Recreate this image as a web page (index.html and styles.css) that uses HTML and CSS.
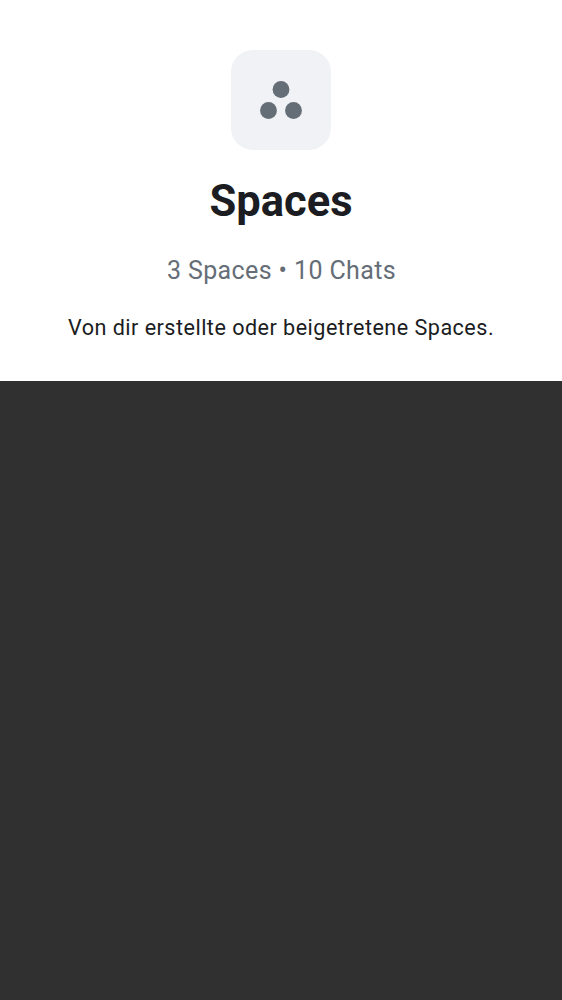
FILE: index.html
```html
<!DOCTYPE html>
<html lang="de">
<head>
<meta charset="utf-8">
<title>Spaces</title>
<link rel="stylesheet" href="styles.css">
</head>
<body>
<header class="header">
  <div class="badge">
    <svg class="icon" viewBox="0 0 50 50" aria-hidden="true">
      <circle cx="25" cy="14.5" r="8.4"/>
      <circle cx="12.5" cy="35.5" r="8.4"/>
      <circle cx="37.5" cy="35.5" r="8.4"/>
    </svg>
  </div>
  <h1 class="title">Spaces</h1>
  <p class="counts">3 Spaces • 10 Chats</p>
  <p class="description">Von dir erstellte oder beigetretene Spaces.</p>
</header>
</body>
</html>
```
FILE: styles.css
```css
body {
  margin: 0;
  background: #303030;
  font-family: Roboto, sans-serif;
}
.header {
  box-sizing: border-box;
  height: 381px;
  padding-top: 50px;
  display: flex;
  flex-direction: column;
  align-items: center;
  background: #fff;
  white-space: nowrap;
}
.badge {
  display: flex;
  align-items: center;
  justify-content: center;
  width: 100px;
  height: 100px;
  border-radius: 22px;
  background: #f0f2f5;
}
.icon {
  width: 50px;
  height: 50px;
  fill: #656d77;
}
.title {
  margin: 24px 0 0;
  font-size: 43.5px;
  line-height: 56px;
  font-weight: 700;
  color: #1b1d22;
}
.counts {
  margin: 25px 0 0;
  padding-left: 1px;
  font-size: 25px;
  line-height: 32px;
  letter-spacing: 0.39px;
  color: #656d77;
}
.description {
  margin: 27px 0 0;
  font-size: 21.6px;
  line-height: 28px;
  letter-spacing: 0.47px;
  color: #1b1d22;
}
```
